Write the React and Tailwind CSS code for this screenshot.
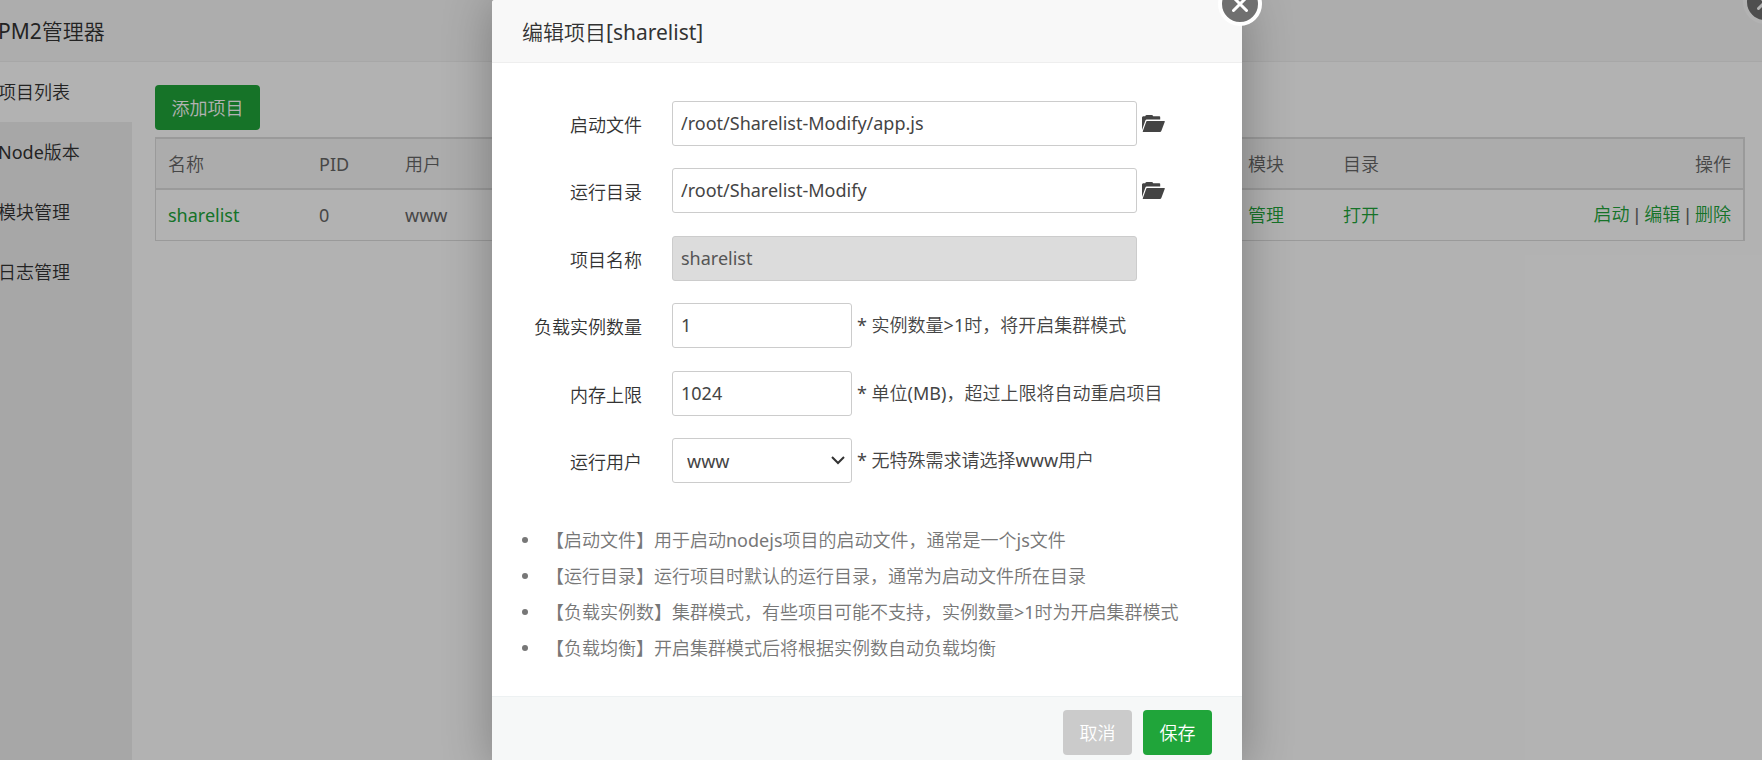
import { useState } from "react";

const navItems = ["项目列表", "Node版本", "模块管理", "日志管理"];

const tips = [
  "【启动文件】用于启动nodejs项目的启动文件，通常是一个js文件",
  "【运行目录】运行项目时默认的运行目录，通常为启动文件所在目录",
  "【负载实例数】集群模式，有些项目可能不支持，实例数量>1时为开启集群模式",
  "【负载均衡】开启集群模式后将根据实例数自动负载均衡",
];

const inputClass =
  "h-[45px] rounded-[3px] border border-[#ccc] bg-white px-2 pb-0.5 text-[#444] outline-none";

function FolderIcon() {
  return (
    <svg viewBox="0 0 23 17" className="h-[17px] w-[23px]" fill="#444" aria-hidden="true">
      <path d="M0 15V2.6Q0 1.4 1.2 1.2H3.2Q3.6 0 4.8 0H9.6Q10.8 0 11.2 1.2H17.4Q18.2 1.2 18.2 2V4.6H4.6Q3.8 4.6 3.5 5.3Z" />
      <path d="M5 6H22.3Q23 6 22.8 6.7L19.3 16Q18.9 17 18 17H1.2Q.5 17 .8 16.2L4.2 6.7Q4.4 6 5 6Z" />
    </svg>
  );
}

function CloseButton({ label }) {
  return (
    <button
      type="button"
      aria-label={label}
      className="flex size-11 items-center justify-center rounded-full border-4 border-white bg-[#707070]"
    >
      <svg viewBox="0 0 16 16" className="size-4" stroke="#fff" strokeWidth="3" strokeLinecap="round" aria-hidden="true">
        <path d="M1.5 1.5L14.5 14.5M14.5 1.5L1.5 14.5" />
      </svg>
    </button>
  );
}

function Row({ id, label, children }) {
  return (
    <div className="flex items-center odd:mb-[22px] even:mb-[23px]">
      <label htmlFor={id} className="mr-[30px] w-[150px] shrink-0 pt-[3px] text-right text-[#333]">
        {label}
      </label>
      {children}
    </div>
  );
}

function Hint({ children }) {
  return <span className="ml-[5px] pb-px text-[#444]">{children}</span>;
}

function Panel() {
  return (
    <div className="relative -ml-0.5 min-h-screen bg-white">
      <header className="flex h-[62px] items-center border-b border-[#f0f0f0] bg-[#f8f8f8] text-[21px] text-[#333]">
        <h1>PM2管理器</h1>
      </header>
      <div className="absolute -top-5 -right-[25px]">
        <CloseButton label="关闭面板" />
      </div>
      <div className="flex min-h-[calc(100vh-62px)]">
        <nav className="w-[134px] shrink-0 bg-[#f0f0f0] text-[#333]">
          {navItems.map((item, i) => (
            <a
              key={item}
              href={"#tab" + i}
              className={i === 0 ? "flex h-[60px] items-center bg-white" : "flex h-[60px] items-center"}
            >
              {item}
            </a>
          ))}
        </nav>
        <main className="grow pt-[23px] pr-[17px] pl-[23px]">
          <button type="button" className="h-[45px] w-[105px] rounded bg-[#20a53a] text-white">
            添加项目
          </button>
          <table className="mt-[7px] w-full table-fixed border-separate border-spacing-0 border-t-2 border-r-2 border-b border-l border-[#ddd] text-left text-[#666]">
            <colgroup>
              <col className="w-[151px]" />
              <col className="w-[86px]" />
              <col />
              <col className="w-[95px]" />
              <col className="w-[412px]" />
            </colgroup>
            <thead className="bg-[#f6f6f6]">
              <tr className="h-[51px]">
                {["名称", "PID", "用户", "模块", "目录"].map((h) =>
                  h === "目录" ? (
                    <th key={h} className="border-b-2 border-[#ddd] px-3 font-normal">
                      <div className="flex justify-between">
                        <span>{h}</span>
                        <span>操作</span>
                      </div>
                    </th>
                  ) : (
                    <th key={h} className="border-b-2 border-[#ddd] px-3 font-normal">
                      {h}
                    </th>
                  )
                )}
              </tr>
            </thead>
            <tbody>
              <tr className="h-[50px]">
                <td className="px-3 text-[#20a53a]">
                  <a href="#sharelist">sharelist</a>
                </td>
                <td className="px-3">0</td>
                <td className="px-3">www</td>
                <td className="px-3 text-[#20a53a]">
                  <a href="#modules">管理</a>
                </td>
                <td className="px-3">
                  <div className="flex justify-between">
                    <a href="#open" className="text-[#20a53a]">打开</a>
                    <span className="font-['Liberation_Sans','Noto_Sans_CJK_SC_DemiLight','Noto_Sans_CJK_SC',sans-serif]">
                      <a href="#start" className="text-[#20a53a]">启动</a> |{" "}
                      <a href="#edit" className="text-[#20a53a]">编辑</a> |{" "}
                      <a href="#delete" className="text-[#20a53a]">删除</a>
                    </span>
                  </div>
                </td>
              </tr>
            </tbody>
          </table>
        </main>
      </div>
    </div>
  );
}

function EditDialog() {
  const [form, setForm] = useState({
    file: "/root/Sharelist-Modify/app.js",
    dir: "/root/Sharelist-Modify",
    count: "1",
    memory: "1024",
    user: "www",
  });
  const set = (key) => (e) => setForm({ ...form, [key]: e.target.value });

  return (
    <div
      role="dialog"
      aria-labelledby="dialog-title"
      className="relative w-[750px] rounded-[3px] bg-white shadow-[1px_1px_50px_rgba(0,0,0,0.3)]"
    >
      <div className="absolute -top-[18px] -right-5">
        <CloseButton label="关闭" />
      </div>
      <header className="flex h-[63px] items-center rounded-t-[3px] border-b border-[#eee] bg-[#f8f8f8] px-[30px] pt-0.5 text-[21px] text-[#333]">
        <h2 id="dialog-title">编辑项目[sharelist]</h2>
      </header>
      <form>
        <div className="pt-[38px]">
          <Row id="file" label="启动文件">
            <input id="file" value={form.file} onChange={set("file")} className={inputClass + " mr-[5px] w-[465px]"} />
            <button type="button" aria-label="选择文件">
              <FolderIcon />
            </button>
          </Row>
          <Row id="dir" label="运行目录">
            <input id="dir" value={form.dir} onChange={set("dir")} className={inputClass + " mr-[5px] w-[465px]"} />
            <button type="button" aria-label="选择目录">
              <FolderIcon />
            </button>
          </Row>
          <Row id="name" label="项目名称">
            <input
              id="name"
              value="sharelist"
              disabled
              className="h-[45px] w-[465px] rounded-[3px] border border-[#ccc] bg-[#dcdcdc] px-2 pb-0.5 text-[#555]"
            />
          </Row>
          <Row id="count" label="负载实例数量">
            <input id="count" value={form.count} onChange={set("count")} className={inputClass + " w-[180px]"} />
            <Hint>* 实例数量&gt;1时，将开启集群模式</Hint>
          </Row>
          <Row id="memory" label="内存上限">
            <input id="memory" value={form.memory} onChange={set("memory")} className={inputClass + " w-[180px]"} />
            <Hint>* 单位(MB)，超过上限将自动重启项目</Hint>
          </Row>
          <Row id="user" label="运行用户">
            <div className="relative">
              <select
                id="user"
                value={form.user}
                onChange={set("user")}
                className="h-[45px] w-[180px] appearance-none rounded-[3px] border border-[#ccc] bg-white px-3.5 text-[#444] outline-none"
              >
                <option>www</option>
                <option>root</option>
              </select>
              <svg
                viewBox="0 0 14 9"
                className="pointer-events-none absolute top-[18px] right-[7px] h-[9px] w-3.5"
                fill="none"
                stroke="#333"
                strokeWidth="2"
                aria-hidden="true"
              >
                <path d="M1 1L7 7L13 1" />
              </svg>
            </div>
            <Hint>* 无特殊需求请选择www用户</Hint>
          </Row>
        </div>
        <ul className="px-[30px] pt-4 pb-[30px] text-[#777]">
          {tips.map((tip) => (
            <li
              key={tip}
              className="flex items-center gap-[18px] leading-9 before:size-1.5 before:rounded-full before:bg-[#777]"
            >
              {tip}
            </li>
          ))}
        </ul>
        <footer className="flex justify-end gap-[11px] rounded-b-[3px] border-t border-[#edf1f2] bg-[#f6f8f8] px-[30px] py-[13px] text-white">
          <button type="button" className="h-[45px] w-[69px] rounded bg-[#cbcbcb]">
            取消
          </button>
          <button type="submit" className="h-[45px] w-[69px] rounded bg-[#20a53a]">
            保存
          </button>
        </footer>
      </form>
    </div>
  );
}

export default function App() {
  return (
    <div className="relative h-screen overflow-hidden font-['Noto_Sans','Noto_Sans_CJK_SC_DemiLight','Noto_Sans_CJK_SC',sans-serif] text-[18px] leading-7">
      <Panel />
      <div className="absolute inset-0 flex items-start justify-center bg-black/30 pr-7">
        <EditDialog />
      </div>
    </div>
  );
}
